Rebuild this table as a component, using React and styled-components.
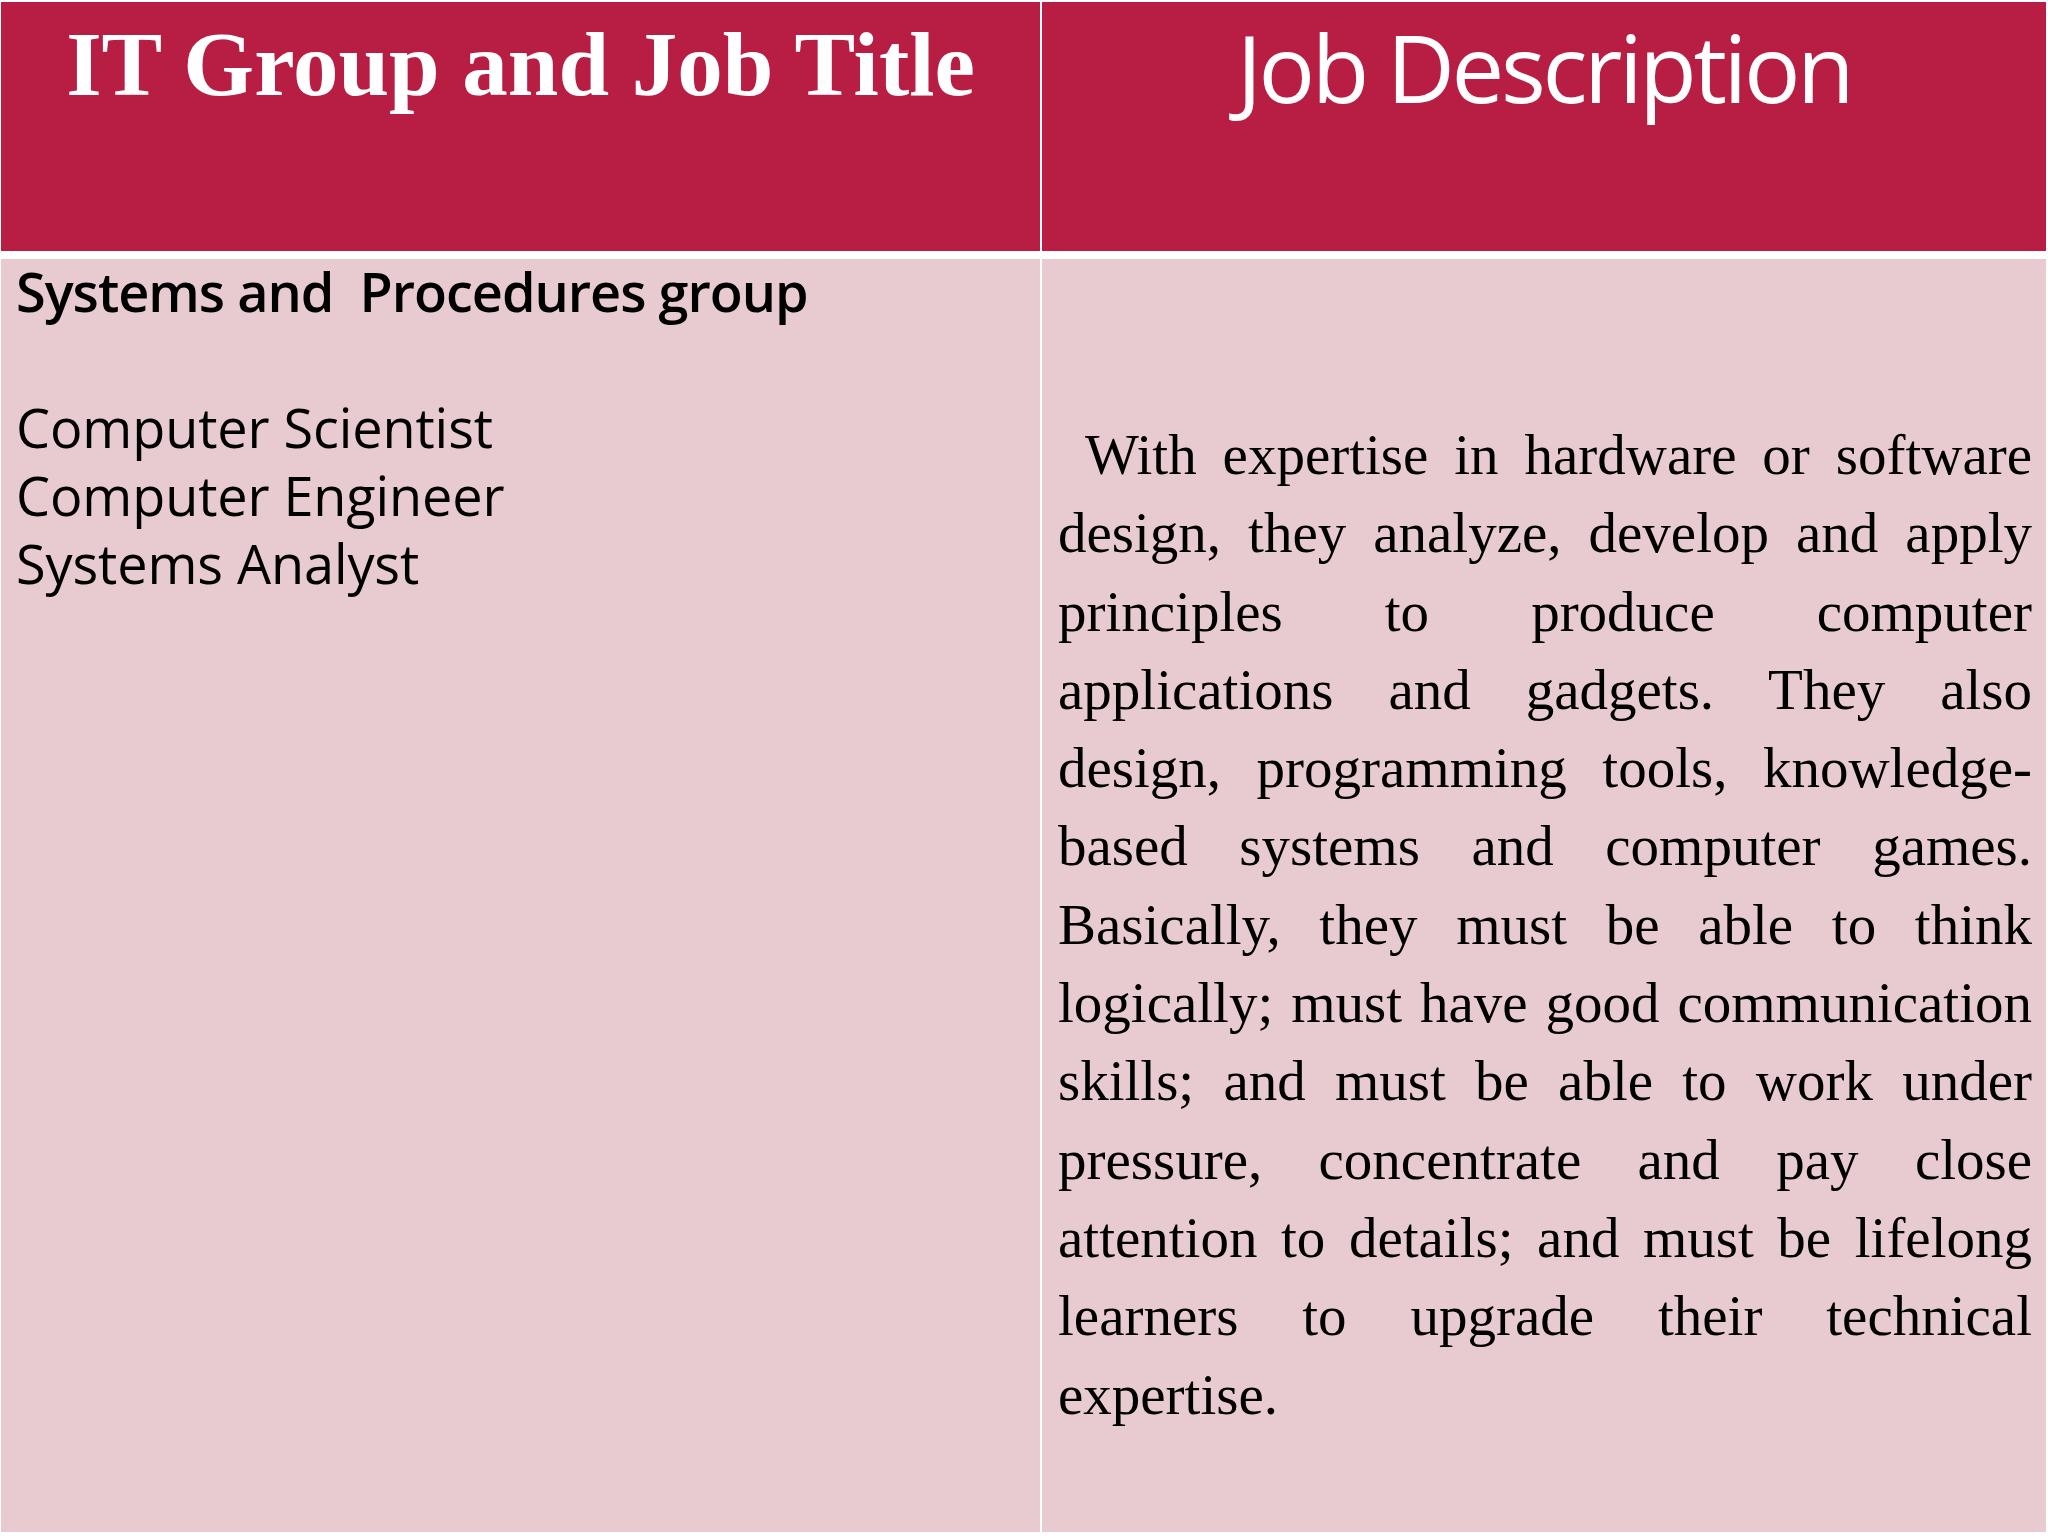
import React from "react";
import styled, { createGlobalStyle } from "styled-components";

const Global = createGlobalStyle`
  html, body { margin: 0; padding: 0; background: #ffffff; }
  #root { width: 2048px; height: 1536px; }
`;

const Slide = styled.div`
  width: 2048px;
  height: 1536px;
  box-sizing: border-box;
  padding: 2px 2px 4px 1px;
  background: #ffffff;
  display: grid;
  grid-template-columns: 1039px 1004px;
  grid-template-rows: 249px 1273px;
  column-gap: 2px;
  row-gap: 8px;
`;

const HeadCell = styled.div`
  background: #b81e43;
  color: #ffffff;
  text-align: center;
  box-sizing: border-box;
  padding-top: ${(p) => p.$top}px;
`;

const SerifTitle = styled.div`
  font-family: "Liberation Serif", "Times New Roman", serif;
  font-weight: 700;
  font-size: 91px;
  line-height: 1;
`;

const SansTitle = styled.div`
  font-family: "Open Sans", "Noto Sans", sans-serif;
  font-weight: 500;
  font-size: 94px;
  line-height: 1;
  letter-spacing: -3.4px;
`;

const BodyCell = styled.div`
  background: #e8cbd0;
  color: #000000;
  box-sizing: border-box;
  padding: ${(p) => p.$pad};
`;

const GroupList = styled.div`
  font-family: "Open Sans", "Noto Sans", sans-serif;
  font-size: 54px;
  line-height: 68px;
  letter-spacing: -0.1px;
  margin-top: -2px;
`;

const GroupName = styled.div`
  font-weight: 600;
  white-space: pre;
  letter-spacing: -1px;
`;

const Spacer = styled.div`
  height: 68px;
`;

const Role = styled.div``;

const Description = styled.p`
  margin: 0;
  font-family: "Liberation Serif", "Times New Roman", serif;
  font-size: 57px;
  line-height: 78.3px;
  text-align: justify;
  text-indent: 27px;
`;

export default function App() {
  return (
    <>
      <Global />
      <Slide>
        <HeadCell $top={17}>
          <SerifTitle>IT Group and Job Title</SerifTitle>
        </HeadCell>
        <HeadCell $top={18}>
          <SansTitle>Job Description</SansTitle>
        </HeadCell>
        <BodyCell $pad="0 0 0 15px">
          <GroupList>
            <GroupName>{"Systems and  Procedures group"}</GroupName>
            <Spacer />
            <Role>Computer Scientist</Role>
            <Role>Computer Engineer</Role>
            <Role>Systems Analyst</Role>
          </GroupList>
        </BodyCell>
        <BodyCell $pad="157px 14px 0 16px">
          <Description>
            With expertise in hardware or software design, they analyze,
            develop and apply principles to produce computer applications and
            gadgets. They also design, programming tools, knowledge-based
            systems and computer games. Basically, they must be able to think
            logically; must have good communication skills; and must be able
            to work under pressure, concentrate and pay close attention to
            details; and must be lifelong learners to upgrade their technical
            expertise.
          </Description>
        </BodyCell>
      </Slide>
    </>
  );
}
